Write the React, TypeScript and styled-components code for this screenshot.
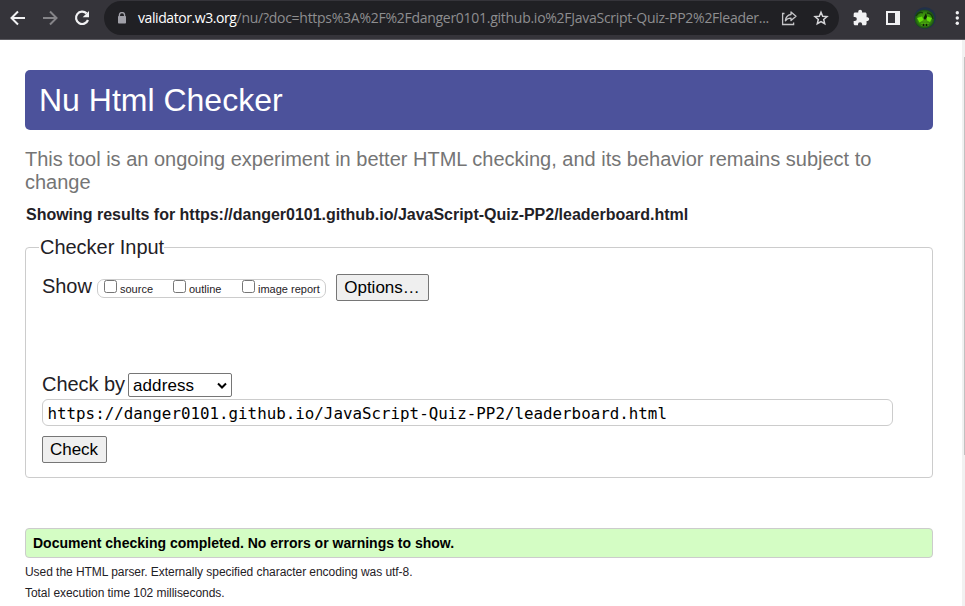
import React from 'react';
import styled, { createGlobalStyle } from 'styled-components';

const Global = createGlobalStyle`
  * { box-sizing: border-box; }
  html, body { margin: 0; background: #fff; overflow: hidden; }
  body { font-family: "Liberation Sans", Arial, sans-serif; color: #1f2126; }
`;

const Screen = styled.div`
  width: 965px;
  height: 606px;
  display: flex;
  flex-direction: column;
  overflow: hidden;
`;

const Toolbar = styled.header`
  flex: none;
  height: 40px;
  display: flex;
  align-items: flex-start;
  padding-top: 1px;
  background: #35343a;
  border-bottom: 1px solid #5b5a60;
`;

const NavButtons = styled.nav`
  flex: none;
  width: 104px;
  height: 34px;
  display: flex;
  align-items: center;
  padding-left: 8px;
  gap: 12px;
`;

const Icon = styled.svg`
  flex: none;
  display: block;
`;

const AddressBar = styled.div`
  flex: none;
  width: 735px;
  height: 34px;
  display: flex;
  align-items: center;
  border-radius: 17px;
  background: #202024;
  padding-left: 13px;
`;

const Url = styled.div`
  flex: none;
  width: 642px;
  margin-left: 11px;
  font: 14px/20px "Open Sans", "Noto Sans", sans-serif;
  letter-spacing: -0.27px;
  white-space: nowrap;
  color: #8e8e90;
`;

const Domain = styled.span`
  color: #fff;
  letter-spacing: -0.42px;
`;

const PageActions = styled.div`
  display: flex;
  align-items: center;
  gap: 15px;
`;

const Actions = styled.div`
  height: 34px;
  display: flex;
  align-items: center;
  padding-left: 12px;
`;

const Viewport = styled.div`
  flex: 1;
  min-height: 0;
  display: flex;
`;

const Page = styled.main`
  width: 962px;
  padding: 30px 29px 0 25px;
`;

const ScrollTrack = styled.div`
  width: 3px;
  background: #f1f1f1;
  padding: 17px 0 0 2px;
`;

const ScrollThumb = styled.div`
  height: 398px;
  background: #c1c1c1;
`;

const Banner = styled.h1`
  margin: 0;
  height: 60px;
  padding-left: 14px;
  border-radius: 5px;
  background: #4c529b;
  color: #fff;
  font-size: 32px;
  font-weight: 400;
  line-height: 60px;
`;

const Tagline = styled.p`
  margin: 18px 0 0;
  color: #757575;
  font-size: 20px;
  line-height: 23px;
`;

const ResultHeading = styled.h2`
  margin: 11px 0 0 1px;
  font-size: 16px;
  line-height: 20px;
  font-weight: 700;
  letter-spacing: -0.012px;
`;

const Fieldset = styled.fieldset`
  margin: 11px 0 0;
  height: 242px;
  min-width: 0;
  padding: 15px 15px 0 16px;
  border: 1px solid #ccc;
  border-radius: 4px;
`;

const Legend = styled.legend`
  margin-left: -3px;
  padding: 0 0 0 1px;
  font-size: 20px;
  line-height: 23px;
  letter-spacing: -0.03px;
`;

const Row = styled.div`
  display: flex;
  align-items: center;
`;

const FieldLabel = styled.span<{ $width: number; $lift: number }>`
  width: ${(p) => p.$width}px;
  padding-bottom: ${(p) => p.$lift}px;
  font-size: 20px;
  line-height: 23px;
  letter-spacing: -0.05px;
  white-space: nowrap;
`;

const CheckGroup = styled.div`
  width: 229px;
  height: 19px;
  display: flex;
  margin: 1px 10px 0 0;
  padding-left: 6px;
  border: 1px solid #ccc;
  border-radius: 7px;
`;

const CheckOption = styled.label`
  flex: none;
  width: 69px;
  display: flex;
  gap: 3px;
  font-size: 11px;
  line-height: 19px;
  white-space: nowrap;
`;

const CheckBox = styled.input`
  appearance: none;
  flex: none;
  width: 13px;
  height: 13px;
  margin: 0;
  border: 1px solid #767676;
  border-radius: 2.5px;
  background: #fff;
`;

const Button = styled.button<{ $width: number }>`
  display: block;
  width: ${(p) => p.$width}px;
  height: 27px;
  padding: 0 1px 0 0;
  border: 1px solid #767676;
  border-radius: 2px;
  background: #efefef;
  color: #000;
  font: 17px/24px "Liberation Sans", Arial, sans-serif;
`;

const CheckBy = styled(Row)`
  margin-top: 72px;
`;

const Picker = styled.div`
  width: 104px;
  height: 24px;
  display: flex;
  align-items: center;
  justify-content: space-between;
  padding: 1px 4px 0;
  border: 1px solid #767676;
  border-radius: 2px;
  color: #000;
  font-size: 17px;
  line-height: 22px;
  letter-spacing: 0.1px;
`;

const UrlInput = styled.input`
  display: block;
  width: 851px;
  height: 27px;
  margin: 2px 0 10px;
  padding: 2px 4.5px 0;
  border: 1px solid #ccc;
  border-radius: 6px;
  color: #000;
  font: 15.83px "DejaVu Sans Mono", "Liberation Mono", monospace;
`;

const Success = styled.p`
  margin: 50px 0 0;
  height: 30px;
  padding-left: 7px;
  border: 1px solid #ccc;
  border-radius: 4px;
  background: #d4fdc4;
  color: #000;
  font-size: 14px;
  font-weight: 700;
  line-height: 29px;
`;

const Footnotes = styled.footer`
  padding-top: 2px;
`;

const Footnote = styled.p`
  margin: 0;
  padding-top: 4px;
  font-size: 12px;
  line-height: 17px;
  letter-spacing: -0.05px;
`;

const views = ['source', 'outline', 'image report'];

export default function App() {
  return (
    <Screen>
      <Global />
      <Toolbar>
        <NavButtons>
          <Icon width="20" height="20" viewBox="0 0 20 20" fill="none" stroke="#f1f1f3" strokeWidth="2">
            <path d="M17 10H4.5M10 3.5 3.5 10l6.5 6.5" />
          </Icon>
          <Icon width="20" height="20" viewBox="0 0 20 20" fill="none" stroke="#858488" strokeWidth="2">
            <path d="M3 10h12.5M10 3.5l6.5 6.5-6.5 6.5" />
          </Icon>
          <Icon width="20" height="20" viewBox="0 0 20 20" fill="none">
            <path d="M14.6 5.4A6.2 6.2 0 1 0 16 12" stroke="#f1f1f3" strokeWidth="2.2" />
            <path d="M17 3v6.3h-6.3z" fill="#f1f1f3" />
          </Icon>
        </NavButtons>
        <AddressBar>
          <Icon width="10" height="12" viewBox="0 0 10 12">
            <path d="M2.4 5V3.2a2.6 2.6 0 0 1 5.2 0V5" fill="none" stroke="#a0a0a8" strokeWidth="1.3" />
            <rect x="1" y="4" width="8" height="7.5" rx="0.8" fill="#a0a0a8" />
          </Icon>
          <Url>
            <Domain>validator.w3.org</Domain>
            /nu/?doc=https%3A%2F%2Fdanger0101.github.io%2FJavaScript-Quiz-PP2%2Fleader...
          </Url>
          <PageActions>
            <Icon width="18" height="18" viewBox="0 0 18 18" fill="none" stroke="#c5c5c8" strokeWidth="1.3">
              <path d="M4.5 4.5H2.6v11h11V13.5" />
              <path d="M11 3 16 7.3l-5 4.2V9.2c-2.7 0-4.4.8-5.6 2.6.3-3.5 2.2-5.8 5.6-6.3z" strokeLinejoin="round" />
            </Icon>
            <Icon width="16" height="16" viewBox="0 0 16 16" fill="none" stroke="#d5d5d8" strokeWidth="1.5">
              <path d="M8 2.2l1.7 4 4.3.4-3.3 2.9 1 4.2L8 11.5l-3.7 2.2 1-4.2L2 6.6l4.3-.4z" />
            </Icon>
          </PageActions>
        </AddressBar>
        <Actions>
          <Icon width="20" height="20" viewBox="0 0 24 24" fill="#f1f1f3">
            <path d="M20 11h-1.3V7.3c0-1-.8-1.8-1.8-1.8h-3.6V4.3a2.3 2.3 0 0 0-4.6 0v1.2H5c-1 0-1.8.8-1.8 1.8v3.4h1.3a2.5 2.5 0 0 1 0 5H3.2V19c0 1 .8 1.8 1.8 1.8h3.4v-1.3a2.5 2.5 0 0 1 5 0v1.3h3.5c1 0 1.8-.8 1.8-1.8v-3.5H20a2.3 2.3 0 0 0 0-4.5z" />
          </Icon>
          <Icon width="43" height="20" viewBox="0 0 43 20">
            <path fill="#f1f1f3" fillRule="evenodd" d="M15 3h14v14H15zM17 5v10h7V5z" />
          </Icon>
          <Icon width="22" height="22" viewBox="0 0 22 22">
            <defs>
              <radialGradient id="skin">
                <stop offset="0" stopColor="#4ca30e" />
                <stop offset="0.65" stopColor="#358a0b" />
                <stop offset="1" stopColor="#184a18" />
              </radialGradient>
            </defs>
            <circle cx="11" cy="11" r="10.8" fill="#20304a" />
            <ellipse cx="10.5" cy="12" rx="10" ry="9.5" fill="url(#skin)" />
            <path d="M2 9q3-5 7-3M13 6q5 0 6 6" stroke="#153c0a" strokeWidth="1.3" fill="none" />
            <path d="M3 11l5-1.5 1.5 3.5-4 2.5zM13 9.5l5 1.5-2 4-3-1.5z" fill="#64df0a" />
            <path d="M12 6l-2.5 5 1.5 2 2-3zM7 17h8l-1 2H8z" fill="#0b1c06" />
            <path d="M8 16v3M11 16v3M14 16v3" stroke="#58bd12" />
          </Icon>
          <Icon width="29" height="20" viewBox="0 0 29 20" fill="#f1f1f3">
            <circle cx="21.3" cy="4.7" r="1.7" />
            <circle cx="21.3" cy="10" r="1.7" />
            <circle cx="21.3" cy="15.3" r="1.7" />
          </Icon>
        </Actions>
      </Toolbar>
      <Viewport>
        <Page>
          <Banner>Nu Html Checker</Banner>
          <Tagline>
            This tool is an ongoing experiment in better HTML checking, and its behavior remains subject to change
          </Tagline>
          <ResultHeading>
            Showing results for https://danger0101.github.io/JavaScript-Quiz-PP2/leaderboard.html
          </ResultHeading>
          <Fieldset>
            <Legend>Checker Input</Legend>
            <Row>
              <FieldLabel $width={55} $lift={2}>Show</FieldLabel>
              <CheckGroup>
                {views.map((view) => (
                  <CheckOption key={view}>
                    <CheckBox type="checkbox" />
                    {view}
                  </CheckOption>
                ))}
              </CheckGroup>
              <Button $width={93}>Options…</Button>
            </Row>
            <CheckBy>
              <FieldLabel $width={86} $lift={1}>Check by</FieldLabel>
              <Picker>
                address
                <Icon width="10" height="8" viewBox="0 0 10 8" fill="none" stroke="#000" strokeWidth="2">
                  <path d="M1 1.5l4 4 4-4" />
                </Icon>
              </Picker>
            </CheckBy>
            <UrlInput readOnly value="https://danger0101.github.io/JavaScript-Quiz-PP2/leaderboard.html" />
            <Button $width={65}>Check</Button>
          </Fieldset>
          <Success>Document checking completed. No errors or warnings to show.</Success>
          <Footnotes>
            <Footnote>Used the HTML parser. Externally specified character encoding was utf-8.</Footnote>
            <Footnote>Total execution time 102 milliseconds.</Footnote>
          </Footnotes>
        </Page>
        <ScrollTrack>
          <ScrollThumb />
        </ScrollTrack>
      </Viewport>
    </Screen>
  );
}
